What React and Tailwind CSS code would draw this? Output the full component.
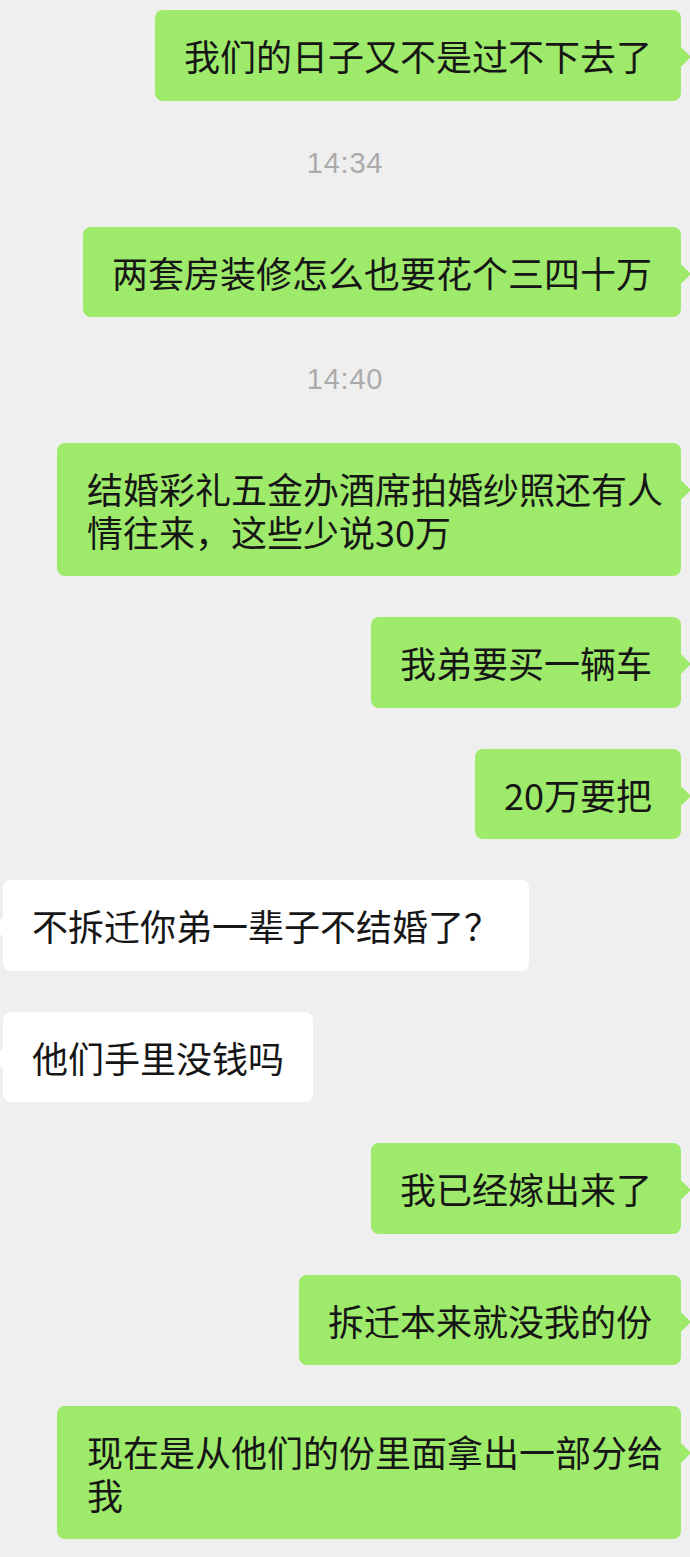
const messages = [
  { side: "right", text: "我们的日子又不是过不下去了" },
  { time: "14:34" },
  { side: "right", text: "两套房装修怎么也要花个三四十万" },
  { time: "14:40" },
  { side: "right", text: "结婚彩礼五金办酒席拍婚纱照还有人情往来，这些少说30万", multi: true },
  { side: "right", text: "我弟要买一辆车" },
  { side: "right", text: "20万要把" },
  { side: "left", text: "不拆迁你弟一辈子不结婚了？" },
  { side: "left", text: "他们手里没钱吗" },
  { side: "right", text: "我已经嫁出来了" },
  { side: "right", text: "拆迁本来就没我的份" },
  { side: "right", text: "现在是从他们的份里面拿出一部分给我", multi: true },
];

function Bubble({ side, text, multi, spaced }) {
  const isMe = side === "right";
  return (
    <div
      className={`flex ${isMe ? "justify-end pr-[9px]" : "justify-start pl-[3px]"} ${
        spaced ? "mt-[41px]" : ""
      }`}
    >
      <div
        className={`relative max-w-[624px] rounded-[8px] py-[24px] text-[36px] leading-[42.5px] text-[#161616] ${
          isMe ? "bg-[#9eea6a]" : "bg-white"
        } ${multi ? "pl-[30px] pr-[16px]" : "px-[29px]"}`}
      >
        <span
          className={`absolute top-[40px] h-[14px] w-[14px] rotate-45 rounded-[2px] ${
            isMe ? "-right-[7px] bg-[#9eea6a]" : "-left-[7px] bg-white"
          }`}
        />
        <span className="relative break-all">{text}</span>
      </div>
    </div>
  );
}

export default function App() {
  return (
    <div
      className="w-[690px] min-h-[1557px] overflow-hidden bg-[#efefef] pt-[10px] pb-[19px]"
      style={{ fontFamily: '"Noto Sans CJK SC", "Noto Sans", sans-serif' }}
    >
      <div className="flex flex-col">
        {messages.map((m, i) => {
          if (m.time) {
            return (
              <div
                key={i}
                className="flex h-[126px] items-center justify-center text-[29px] tracking-[0.8px] text-[#ababab]"
                style={{ fontFamily: '"Liberation Sans", Arial, sans-serif' }}
              >
                {m.time}
              </div>
            );
          }
          const prev = messages[i - 1];
          const spaced = i > 0 && !prev.time;
          return <Bubble key={i} {...m} spaced={spaced} />;
        })}
      </div>
    </div>
  );
}
